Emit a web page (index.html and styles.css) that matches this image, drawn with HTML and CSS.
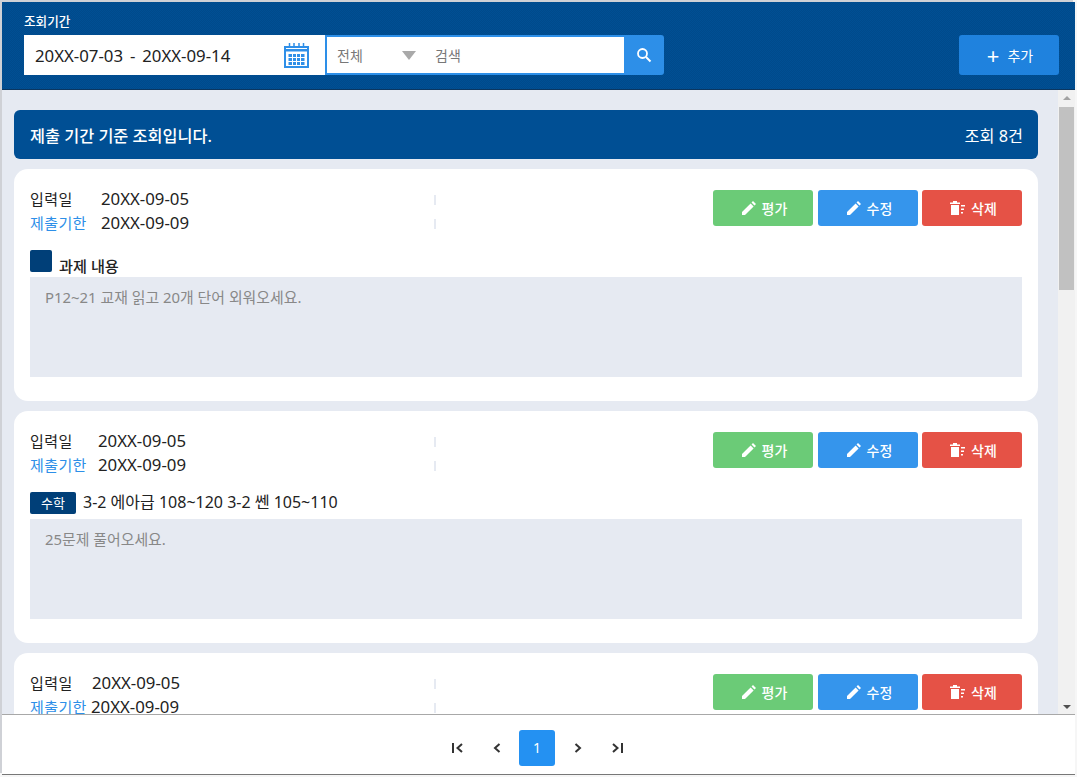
FILE: index.html
```html
<!DOCTYPE html>
<html lang="ko">
<head>
<meta charset="utf-8">
<title>과제 조회</title>
<link rel="stylesheet" href="styles.css">
</head>
<body>
<div class="app">
  <header class="top">
    <div class="filter">
      <div class="filter-label">조회기간</div>
      <div class="filter-row">
        <div class="date-box">
          <span class="date-text">20XX-07-03 - 20XX-09-14</span>
          <svg class="cal" width="25" height="25" viewBox="0 0 25 25"><path d="M1 4h23v20H1z" fill="#fff" stroke="#2f8fe8" stroke-width="2"/><path d="M1 6h23v2.500H1z" fill="#2f8fe8"/><path d="M5.500 0v5M10 0v5M15 0v5M19.500 0v5" stroke="#2f8fe8" stroke-width="1.500"/><path fill="#2f8fe8" d="M4.500 11h3.500v3H4.500zM9 11h3v3H9zM13 11h3v3h-3zM17 11h3.500v3H17zM4.500 15h3.500v3H4.500zM9 15h3v3H9zM13 15h3v3h-3zM17 15h3.500v3H17zM4.500 19h3.500v3H4.500zM9 19h3v3H9zM13 19h3v3h-3zM17 19h3.500v3H17z"/></svg>
        </div>
        <div class="search">
          <div class="search-field">
            <span class="sel-text">전체</span>
            <span class="sel-arrow"></span>
            <span class="search-text">검색</span>
          </div>
          <button class="search-btn" type="button" aria-label="검색">
            <svg width="16" height="16" viewBox="0 0 16 16"><circle cx="6.500" cy="6.500" r="4.500" fill="none" stroke="#fff" stroke-width="1.800"/><path d="M10 10l4.500 4.500" stroke="#fff" stroke-width="2"/></svg>
          </button>
        </div>
      </div>
    </div>
    <button class="add-btn" type="button"><span class="plus">+</span>추가</button>
  </header>

  <div class="middle">
    <main class="list">
      <div class="notice"><strong>제출 기간 기준 조회입니다.</strong><span>조회 8건</span></div>

      <section class="card">
        <div class="card-head">
          <div class="meta">
            <div class="meta-row"><span class="lbl">입력일</span><span class="val v1">20XX-09-05</span></div>
            <div class="meta-row"><span class="lbl due">제출기한</span><span class="val v1">20XX-09-09</span></div>
          </div>
          <div class="ticks"><i></i><i></i></div>
          <div class="actions">
            <button class="btn green" type="button"><svg width="14" height="14" viewBox="0 0 14 14"><path d="M0 14V11L8.600 2.400l3 3L3 14zM9.500 1.500L11 0l3 3-1.500 1.500z" fill="#fff"/></svg>평가</button>
            <button class="btn blue" type="button"><svg width="14" height="14" viewBox="0 0 14 14"><path d="M0 14V11L8.600 2.400l3 3L3 14zM9.500 1.500L11 0l3 3-1.500 1.500z" fill="#fff"/></svg>수정</button>
            <button class="btn red" type="button"><svg width="15" height="14" viewBox="0 0 15 14"><path d="M3 0h4v1.500h3V3H0V1.500h3zM1 4h8v10H1zM11 4h4v1.500h-4zM11 7.500h3V9h-3zM11 11h2v1.500h-2z" fill="#fff"/></svg>삭제</button>
          </div>
        </div>
        <div class="subject"><span class="tag blank"></span><b class="title low">과제 내용</b></div>
        <div class="body-box">P12~21 교재 읽고 20개 단어 외워오세요.</div>
      </section>

      <section class="card">
        <div class="card-head">
          <div class="meta">
            <div class="meta-row"><span class="lbl">입력일</span><span class="val v2">20XX-09-05</span></div>
            <div class="meta-row"><span class="lbl due">제출기한</span><span class="val v2">20XX-09-09</span></div>
          </div>
          <div class="ticks"><i></i><i></i></div>
          <div class="actions">
            <button class="btn green" type="button"><svg width="14" height="14" viewBox="0 0 14 14"><path d="M0 14V11L8.600 2.400l3 3L3 14zM9.500 1.500L11 0l3 3-1.500 1.500z" fill="#fff"/></svg>평가</button>
            <button class="btn blue" type="button"><svg width="14" height="14" viewBox="0 0 14 14"><path d="M0 14V11L8.600 2.400l3 3L3 14zM9.500 1.500L11 0l3 3-1.500 1.500z" fill="#fff"/></svg>수정</button>
            <button class="btn red" type="button"><svg width="15" height="14" viewBox="0 0 15 14"><path d="M3 0h4v1.500h3V3H0V1.500h3zM1 4h8v10H1zM11 4h4v1.500h-4zM11 7.500h3V9h-3zM11 11h2v1.500h-2z" fill="#fff"/></svg>삭제</button>
          </div>
        </div>
        <div class="subject"><span class="tag">수학</span><b class="title">3-2 에아급 108~120 3-2 쎈 105~110</b></div>
        <div class="body-box">25문제 풀어오세요.</div>
      </section>

      <section class="card">
        <div class="card-head">
          <div class="meta">
            <div class="meta-row"><span class="lbl">입력일</span><span class="val v3">20XX-09-05</span></div>
            <div class="meta-row"><span class="lbl due">제출기한</span><span class="val v3b">20XX-09-09</span></div>
          </div>
          <div class="ticks"><i></i><i></i></div>
          <div class="actions">
            <button class="btn green" type="button"><svg width="14" height="14" viewBox="0 0 14 14"><path d="M0 14V11L8.600 2.400l3 3L3 14zM9.500 1.500L11 0l3 3-1.500 1.500z" fill="#fff"/></svg>평가</button>
            <button class="btn blue" type="button"><svg width="14" height="14" viewBox="0 0 14 14"><path d="M0 14V11L8.600 2.400l3 3L3 14zM9.500 1.500L11 0l3 3-1.500 1.500z" fill="#fff"/></svg>수정</button>
            <button class="btn red" type="button"><svg width="15" height="14" viewBox="0 0 15 14"><path d="M3 0h4v1.500h3V3H0V1.500h3zM1 4h8v10H1zM11 4h4v1.500h-4zM11 7.500h3V9h-3zM11 11h2v1.500h-2z" fill="#fff"/></svg>삭제</button>
          </div>
        </div>
      </section>
    </main>
    <div class="scrollbar">
      <span class="arrow up"></span>
      <div class="track"><div class="thumb"></div></div>
      <span class="arrow down"></span>
    </div>
  </div>

  <footer class="pager">
    <svg class="pg first" width="12" height="10" viewBox="0 0 12 10"><path d="M1 0v10" stroke="#333" stroke-width="2"/><path d="M10 1L5.500 5l4.500 4" fill="none" stroke="#333" stroke-width="2"/></svg>
    <svg class="pg" width="12" height="10" viewBox="0 0 12 10"><path d="M8.500 1L4 5l4.500 4" fill="none" stroke="#333" stroke-width="2"/></svg>
    <span class="page-on">1</span>
    <svg class="pg" width="12" height="10" viewBox="0 0 12 10"><path d="M3.500 1L8 5 3.500 9" fill="none" stroke="#333" stroke-width="2"/></svg>
    <svg class="pg" width="12" height="10" viewBox="0 0 12 10"><path d="M1 1l4.500 4L1 9" fill="none" stroke="#333" stroke-width="2"/><path d="M10 0v10" stroke="#333" stroke-width="2"/></svg>
  </footer>
</div>
</body>
</html>
```

FILE: styles.css
```css
* { box-sizing: border-box; }
html, body { margin: 0; height: 100%; }
body {
  width: 1077px;
  height: 777px;
  overflow: hidden;
  background: #f6f6f6;
  font-family: "Noto Sans", "Noto Sans CJK KR", sans-serif;
  color: #222;
}
.app {
  width: 1073px;
  height: 773px;
  margin: 2px 0 0 2px;
  display: flex;
  flex-direction: column;
  border-bottom: 1px solid #777;
  background: #fff;
  box-shadow: -2px -2px 0 #cfd1d6;
}
.top {
  height: 88px;
  flex: none;
  display: flex;
  justify-content: space-between;
  align-items: flex-start;
  padding: 0 16px 0 22px;
  background-color: #004f94;
  background-image: repeating-conic-gradient(#004a8b 0 25%, transparent 0 50%);
  background-size: 2px 2px;
  border-bottom: 1px solid #0b3660;
}
.filter-label {
  margin-top: 12px;
  height: 21px;
  font-size: 12.6px;
  line-height: 16px;
  font-weight: 500;
  color: #fff;
}
.filter-row { display: flex; height: 40px; }
.date-box {
  width: 301px;
  display: flex;
  align-items: center;
  justify-content: space-between;
  padding: 0 16px 0 11px;
  background: #fff;
}
.date-text { font-size: 16.800px; color: #222; word-spacing: 2.500px; }
.cal { display: block; }
.search { display: flex; width: 339px; }
.search-field {
  width: 299px;
  display: flex;
  align-items: center;
  border: 2px solid #2d8fe8;
  border-right: 0;
  background: #fff;
  font-size: 14px;
  color: #777;
}
.sel-text { margin-left: 10px; width: 65px; }
.sel-arrow {
  width: 0;
  height: 0;
  border-left: 7px solid transparent;
  border-right: 7px solid transparent;
  border-top: 9px solid #a9a9a9;
}
.search-text { margin-left: 19px; }
.search-btn {
  width: 40px;
  padding: 0;
  border: 0;
  border-radius: 0 3px 3px 0;
  background: #2d8fe8;
  display: flex;
  align-items: center;
  justify-content: center;
}
.add-btn {
  margin-top: 33px;
  width: 100px;
  height: 40px;
  padding: 0 0 0 2px;
  border: 0;
  border-radius: 3px;
  background: #1f82de;
  color: #fff;
  font-family: inherit;
  font-size: 14px;
  display: flex;
  align-items: center;
  justify-content: center;
}
.plus { font-size: 22px; line-height: 20px; margin-right: 8px; }
.middle { flex: 1; min-height: 0; display: flex; }
.list {
  flex: 1;
  min-width: 0;
  overflow: hidden;
  padding: 20px 20px 0 12px;
  background: #e6eaf2;
  border-bottom: 1px solid #a8a8a8;
}
.notice {
  height: 49px;
  margin-bottom: 10px;
  padding: 0 15px 0 16px;
  display: flex;
  align-items: center;
  justify-content: space-between;
  background: #004f94;
  border-radius: 6px;
  color: #fff;
  font-size: 16.300px;
}
.notice strong { font-weight: 500; }
.card {
  height: 232px;
  margin-bottom: 10px;
  padding: 21px 16px 0;
  background: #fff;
  border-radius: 14px;
}
.card-head { display: flex; height: 52px; }
.meta { width: 404px; margin-top: -4px; }
.meta-row { display: flex; height: 24px; align-items: center; font-size: 15px; letter-spacing: 0.400px; }
.lbl { color: #222; width: 58px; flex: none; }
.due { color: #2d8fe8; }
.val { font-size: 16.800px; letter-spacing: 0; color: #222; }
.v1 { margin-left: 13px; }
.v2 { margin-left: 10px; }
.v3 { margin-left: 4px; }
.v3b { margin-left: 3px; }
.ticks { width: 279px; display: flex; flex-direction: column; }
.ticks i {
  display: block;
  width: 2px;
  height: 10px;
  margin: 5px 0 9px;
  background: #e6eaf2;
}
.actions { display: flex; gap: 4px; height: 36px; }
.actions .btn:first-child { margin-right: 1px; }
.btn {
  width: 100px;
  height: 36px;
  padding: 0 0 0 3px;
  border: 0;
  border-radius: 3px;
  color: #fff;
  font-family: inherit;
  font-size: 14px;
  font-weight: 500;
  display: flex;
  align-items: center;
  justify-content: center;
  gap: 6px;
}
.green { background: #6bcb77; }
.blue { background: #3595ec; }
.red { background: #e55246; }
.subject { height: 35px; display: flex; align-items: flex-end; padding-bottom: 5px; }
.tag {
  width: 46px;
  height: 22px;
  border-radius: 2px;
  background: #003f78;
  color: #fff;
  font-size: 13px;
  line-height: 22px;
  text-align: center;
  flex: none;
}
.tag.blank { width: 22px; }
.title { font-size: 16px; font-weight: 400; line-height: 24px; color: #222; margin-left: 7px; }
.title.low { font-size: 15.200px; font-weight: 500; line-height: 18px; margin-bottom: -3px; }
.body-box {
  height: 100px;
  padding: 10px 15px;
  background: #e6eaf2;
  color: #888;
  font-size: 14.900px;
  line-height: 20px;
}
.scrollbar {
  width: 17px;
  flex: none;
  display: flex;
  flex-direction: column;
  align-items: center;
  background: #f1f1f1;
  border-bottom: 1px solid #a8a8a8;
}
.track { flex: 1; width: 100%; padding: 0 1px; }
.thumb { height: 183px; background: #c1c1c1; }
.arrow { width: 0; height: 0; border-left: 4px solid transparent; border-right: 4px solid transparent; margin: 6px 0; }
.arrow.up { border-bottom: 4px solid #a3a3a3; margin-bottom: 7px; }
.arrow.down { border-top: 4px solid #505050; margin-bottom: 5px; }
.pager {
  height: 59px;
  flex: none;
  display: flex;
  align-items: center;
  justify-content: center;
  padding: 15px 1px 8px 0;
  background: #fff;
}
.pg { display: block; margin: 0 14px; flex: none; }
.pg.first { margin-right: 13px; }
.page-on {
  width: 36px;
  height: 36px;
  margin: 0 3px 0 2px;
  border-radius: 3px;
  background: #2491f2;
  color: #fff;
  font-size: 14px;
  line-height: 36px;
  text-align: center;
}
```
